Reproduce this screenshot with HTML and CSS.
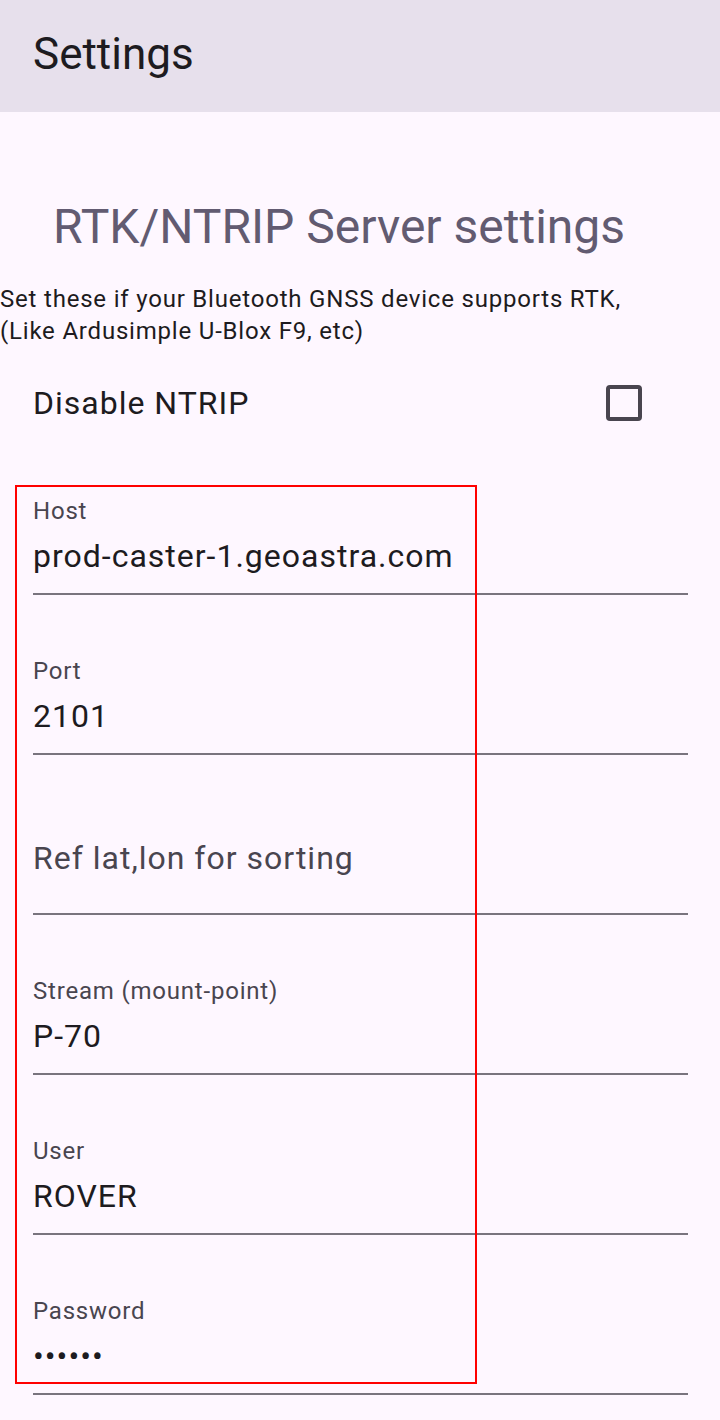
FILE: index.html
```html
<!DOCTYPE html>
<html lang="en">
<head>
<meta charset="utf-8">
<title>Settings</title>
<link rel="stylesheet" href="styles.css">
</head>
<body>
<header class="appbar"><h1 class="appbar-title">Settings</h1></header>
<main class="content">
  <h2 class="section-title">RTK/NTRIP Server settings</h2>
  <p class="section-desc">Set these if your Bluetooth GNSS device supports RTK,<br>(Like Ardusimple U-Blox F9, etc)</p>
  <div class="check-row">
    <span class="check-label">Disable NTRIP</span>
    <span class="checkbox"></span>
  </div>
  <div class="fields">
    <div class="field"><span class="field-label">Host</span><span class="field-value">prod-caster-1.geoastra.com</span></div>
    <div class="field"><span class="field-label">Port</span><span class="field-value">2101</span></div>
    <div class="field field-empty"><span class="field-placeholder">Ref lat,lon for sorting</span></div>
    <div class="field"><span class="field-label">Stream (mount-point)</span><span class="field-value">P-70</span></div>
    <div class="field"><span class="field-label">User</span><span class="field-value">ROVER</span></div>
    <div class="field"><span class="field-label">Password</span><span class="field-value field-password">••••••</span></div>
    <div class="highlight"></div>
  </div>
</main>
</body>
</html>
```
FILE: styles.css
```css
* { box-sizing: border-box; }
html, body {
  margin: 0;
  padding: 0;
  background: #fef7ff;
  font-family: Roboto, "Liberation Sans", sans-serif;
  color: #1d1b20;
}
.appbar {
  height: 112px;
  background: #e7e0ec;
  display: flex;
  align-items: center;
  padding-left: 33px;
}
.appbar-title {
  margin: 0;
  font-size: 44px;
  font-weight: 400;
  line-height: 52px;
  color: #1d1b20;
  position: relative;
  top: -2px;
}
.content {
  display: flex;
  flex-direction: column;
}
.section-title {
  margin: 83px 0 0 53px;
  font-size: 48px;
  font-weight: 400;
  line-height: 64px;
  color: #625b71;
}
.section-desc {
  margin: 24px 0 0 0;
  font-size: 24px;
  line-height: 32px;
  letter-spacing: 0.8px;
  color: #1d1b20;
}
.check-row {
  margin-top: 24px;
  height: 64px;
  display: flex;
  align-items: center;
  justify-content: space-between;
  padding: 0 78px 0 33px;
}
.check-label {
  font-size: 32px;
  letter-spacing: 1px;
  color: #1d1b20;
}
.checkbox {
  width: 36px;
  height: 36px;
  border: 4px solid #49454f;
  border-radius: 4px;
}
.fields {
  position: relative;
  display: flex;
  flex-direction: column;
}
.field {
  height: 160px;
  margin: 0 32px 0 33px;
  display: flex;
  flex-direction: column;
  justify-content: flex-end;
  padding-bottom: 17px;
  border-bottom: 2px solid #79747e;
}
.field-label {
  font-size: 24px;
  line-height: 32px;
  color: #49454f;
  letter-spacing: 0.8px;
}
.field-value {
  margin-top: 9px;
  font-size: 32px;
  line-height: 40px;
  color: #1d1b20;
  letter-spacing: 1px;
}
.field-empty {
  padding-bottom: 35px;
}
.field-placeholder {
  font-size: 32px;
  line-height: 40px;
  color: #49454f;
  letter-spacing: 1px;
}
.highlight {
  position: absolute;
  left: 15px;
  top: 50px;
  width: 462px;
  height: 899px;
  border: 2px solid #ff0000;
  pointer-events: none;
}
```
